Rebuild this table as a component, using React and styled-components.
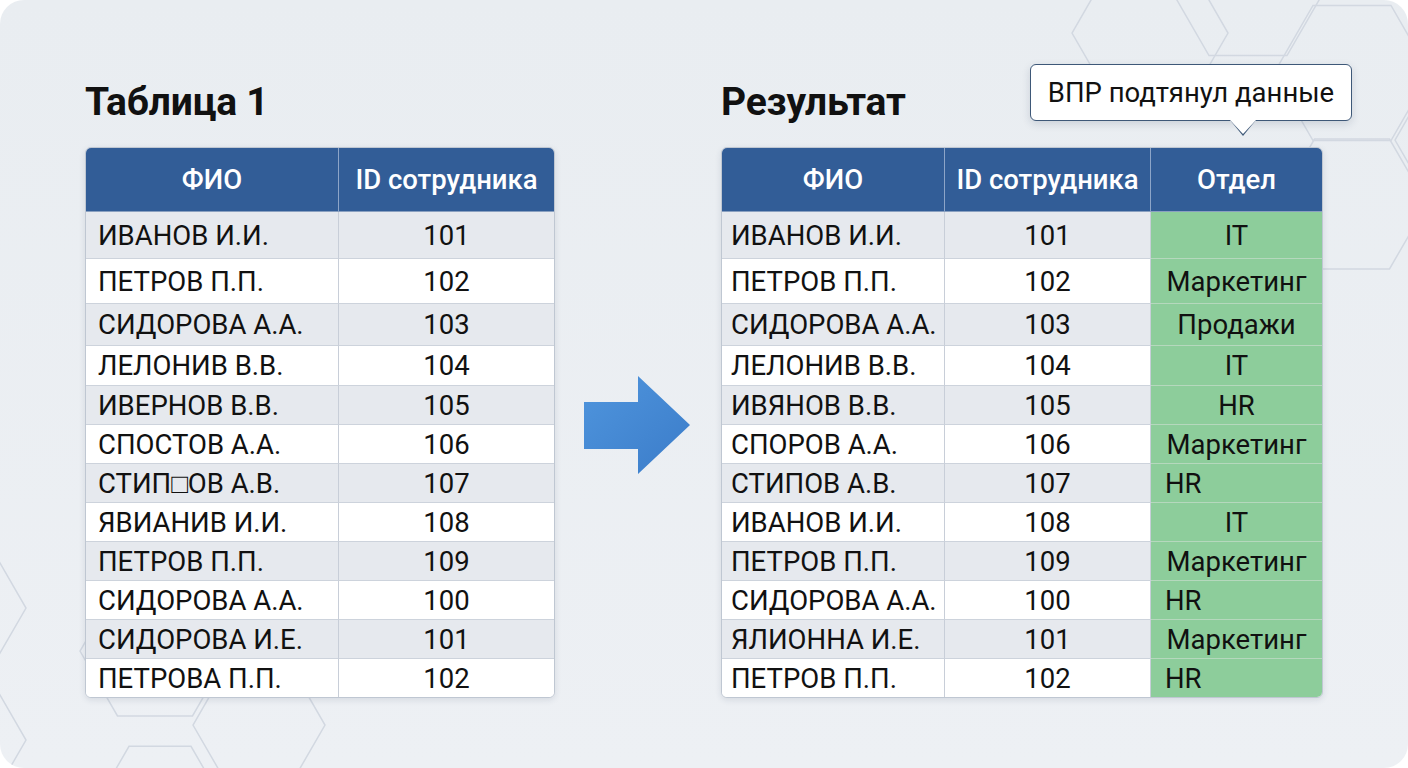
import React from 'react'
import styled, { createGlobalStyle } from 'styled-components'

const GlobalStyle = createGlobalStyle`
    html, body {
        margin: 0;
        padding: 0;
        background: #ffffff;
    }
    body {
        font-family: Roboto, "Liberation Sans", Arial, sans-serif;
    }
`

const ROW_HEIGHTS = [47, 45, 42, 40, 39, 39, 39, 39, 39, 39, 39, 38]

const leftRows = [
    ['ИВАНОВ И.И.', '101'],
    ['ПЕТРОВ П.П.', '102'],
    ['СИДОРОВА А.А.', '103'],
    ['ЛЕЛОНИВ В.В.', '104'],
    ['ИВЕРНОВ В.В.', '105'],
    ['СПОСТОВ А.А.', '106'],
    ['СТИП\u25A1ОВ А.В.', '107'],
    ['ЯВИАНИВ И.И.', '108'],
    ['ПЕТРОВ П.П.', '109'],
    ['СИДОРОВА А.А.', '100'],
    ['СИДОРОВА И.Е.', '101'],
    ['ПЕТРОВА П.П.', '102'],
]

const rightRows = [
    ['ИВАНОВ И.И.', '101', 'IT', 'center'],
    ['ПЕТРОВ П.П.', '102', 'Маркетинг', 'center'],
    ['СИДОРОВА А.А.', '103', 'Продажи', 'center'],
    ['ЛЕЛОНИВ В.В.', '104', 'IT', 'center'],
    ['ИВЯНОВ В.В.', '105', 'HR', 'center'],
    ['СПОРОВ А.А.', '106', 'Маркетинг', 'center'],
    ['СТИПОВ А.В.', '107', 'HR', 'left'],
    ['ИВАНОВ И.И.', '108', 'IT', 'center'],
    ['ПЕТРОВ П.П.', '109', 'Маркетинг', 'center'],
    ['СИДОРОВА А.А.', '100', 'HR', 'left'],
    ['ЯЛИОННА И.Е.', '101', 'Маркетинг', 'center'],
    ['ПЕТРОВ П.П.', '102', 'HR', 'left'],
]

// decorative honeycomb, [cx, cy, r]
const hexes = [
    [1150, 33, 78],
    [1248, -12, 78],
    [1352, 73, 78],
    [1352, 204, 75],
    [1470, 140, 75],
    [-40, 608, 66],
    [-40, 740, 66],
    [155, 651, 75],
    [259, 725, 66],
    [160, 800, 62],
]

const hexPoints = (cx, cy, r) => {
    const h = (r * Math.sqrt(3)) / 2
    return [
        [cx - r, cy],
        [cx - r / 2, cy - h],
        [cx + r / 2, cy - h],
        [cx + r, cy],
        [cx + r / 2, cy + h],
        [cx - r / 2, cy + h],
    ].map(p => p.join(',')).join(' ')
}

const App = () => {
    return (
        <>
            <GlobalStyle />
            <Panel>
                <Honeycomb viewBox="0 0 1408 768" preserveAspectRatio="none">
                    {hexes.map(([cx, cy, r], i) => (
                        <polygon key={i} points={hexPoints(cx, cy, r)} />
                    ))}
                </Honeycomb>

                <Content>
                    <Section>
                        <Title>Таблица 1</Title>
                        <Table $cols="253px 215px" $rows={ROW_HEIGHTS}>
                            <HeadCell>ФИО</HeadCell>
                            <HeadCell $last>ID сотрудника</HeadCell>
                            {leftRows.map(([name, id], i) => (
                                <React.Fragment key={i}>
                                    <Cell $stripe={i % 2 === 0} $lastRow={i === leftRows.length - 1}>{name}</Cell>
                                    <Cell $stripe={i % 2 === 0} $lastRow={i === leftRows.length - 1} $align="center" $last>{id}</Cell>
                                </React.Fragment>
                            ))}
                        </Table>
                    </Section>

                    <ArrowBox>
                        <svg width="106" height="99" viewBox="0 0 106 99">
                            <defs>
                                <linearGradient id="arrowFill" x1="0" y1="0" x2="1" y2="1">
                                    <stop offset="0" stopColor="#4f95dd" />
                                    <stop offset="1" stopColor="#3b7cc9" />
                                </linearGradient>
                            </defs>
                            <polygon points="0,26 54,26 54,0 106,49 54,98 54,73 0,73" fill="url(#arrowFill)" />
                        </svg>
                    </ArrowBox>

                    <Section>
                        <Title>Результат</Title>
                        <Tooltip>ВПР подтянул данные</Tooltip>
                        <Table $cols="223px 206px 171px" $rows={ROW_HEIGHTS}>
                            <HeadCell>ФИО</HeadCell>
                            <HeadCell>ID сотрудника</HeadCell>
                            <HeadCell $last>Отдел</HeadCell>
                            {rightRows.map(([name, id, dept, align], i) => {
                                const lastRow = i === rightRows.length - 1
                                return (
                                    <React.Fragment key={i}>
                                        <Cell $stripe={i % 2 === 0} $lastRow={lastRow} $pad={9}>{name}</Cell>
                                        <Cell $stripe={i % 2 === 0} $lastRow={lastRow} $align="center">{id}</Cell>
                                        <Cell $green $lastRow={lastRow} $align={align} $pad={14} $last>{dept}</Cell>
                                    </React.Fragment>
                                )
                            })}
                        </Table>
                    </Section>
                </Content>
            </Panel>
        </>
    )
}

export default App

const Panel = styled.div`
    position: relative;
    width: 1408px;
    height: 768px;
    border-radius: 24px;
    overflow: hidden;
    background: linear-gradient(180deg, #e9edf1 0%, #edf0f4 100%);
`

const Honeycomb = styled.svg`
    position: absolute;
    inset: 0;
    width: 100%;
    height: 100%;
    pointer-events: none;

    polygon {
        fill: none;
        stroke: #d2d8e1;
        stroke-width: 1.5;
    }
`

const Content = styled.div`
    position: relative;
    display: flex;
    align-items: flex-start;
    padding: 79px 0 0 85px;
`

const Section = styled.div`
    position: relative;
    display: flex;
    flex-direction: column;
`

const Title = styled.h2`
    margin: 0 0 22px;
    font-family: Roboto, "Liberation Sans", sans-serif;
    font-size: 39px;
    line-height: 46px;
    font-weight: 700;
    color: #111;
    letter-spacing: -0.2px;
`

const Table = styled.div`
    display: grid;
    grid-template-columns: ${p => p.$cols};
    grid-template-rows: 64px ${p => p.$rows.map(h => `${h}px`).join(' ')};
    border: 1px solid #bfc7d2;
    border-radius: 6px;
    overflow: hidden;
    background: #fff;
    box-shadow: 0 2px 6px rgba(40, 60, 90, 0.12);
`

const HeadCell = styled.div`
    display: flex;
    align-items: center;
    justify-content: center;
    background: #325d97;
    color: #fff;
    font-size: 27.5px;
    font-weight: 500;
    white-space: nowrap;
    border-right: ${p => (p.$last ? 'none' : '1.5px solid #8da5c8')};
    border-bottom: 1px solid #8aa0c0;
`

const Cell = styled.div`
    display: flex;
    align-items: center;
    justify-content: ${p => (p.$align === 'center' ? 'center' : 'flex-start')};
    padding-left: ${p => (p.$align === 'center' ? 0 : p.$pad || 12)}px;
    background: ${p => (p.$green ? '#8dcd9b' : p.$stripe ? '#e6e9ee' : '#ffffff')};
    color: #111;
    font-size: 27.5px;
    font-weight: 400;
    white-space: nowrap;
    border-right: ${p => (p.$last ? 'none' : '1px solid #c8ced8')};
    border-bottom: ${p => (p.$lastRow ? 'none' : p.$green ? '1px solid #b5d8bd' : '1px solid #cdd3dc')};
`

const ArrowBox = styled.div`
    margin: 297px 31px 0 29px;
    display: flex;
`

const Tooltip = styled.div`
    position: absolute;
    left: 309px;
    top: -15px;
    width: 322px;
    height: 57px;
    box-sizing: border-box;
    display: flex;
    align-items: center;
    justify-content: center;
    background: #fff;
    border: 1.5px solid #3e5878;
    border-radius: 6px;
    box-shadow: 0 3px 8px rgba(30, 50, 80, 0.15);
    font-size: 27.5px;
    color: #111;
    white-space: nowrap;

    &::before,
    &::after {
        content: '';
        position: absolute;
        left: 199px;
        width: 0;
        height: 0;
        border-left: 13px solid transparent;
        border-right: 13px solid transparent;
    }

    &::before {
        bottom: -16px;
        border-top: 16px solid #3e5878;
    }

    &::after {
        bottom: -13.5px;
        border-top: 14px solid #fff;
    }
`
